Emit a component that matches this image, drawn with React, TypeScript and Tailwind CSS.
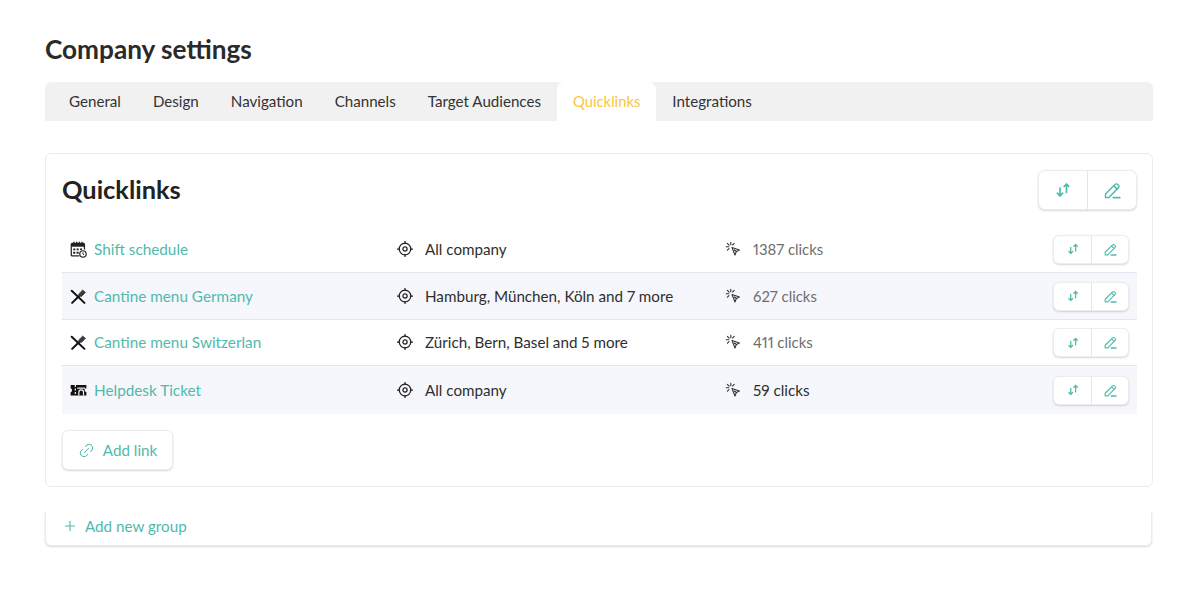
import React from "react";
import { Link2, Plus } from "lucide-react";

const tabs = ["General", "Design", "Navigation", "Channels", "Target Audiences", "Quicklinks", "Integrations"];

function SortIcon({ size }: { size: number }) {
  return (
    <svg width={size} height={size} viewBox="0 0 16 16" fill="none" stroke="#50baab" strokeWidth="1.7" strokeLinecap="round" strokeLinejoin="round">
      <path d="M5 6v8M2.4 11.2 5 14l2.6-2.8" />
      <path d="M11.5 10.5V2M9.2 4.4 11.5 2l2.3 2.4" />
    </svg>
  );
}

function PenIcon({ size }: { size: number }) {
  return (
    <svg width={size} height={size} viewBox="0 0 16 16" fill="none" stroke="#50baab" strokeWidth="1.35" strokeLinecap="round" strokeLinejoin="round">
      <path d="M1.4 14.6v-3.2L10.6 2.2a1.4 1.4 0 0 1 2 0l1.1 1.1a1.4 1.4 0 0 1 0 2L4.6 14.6z" />
      <path d="M9.2 3.6l3.1 3.1" />
      <path d="M8.8 14.7h6" strokeWidth="1.7" />
    </svg>
  );
}

function CalendarIcon() {
  return (
    <svg width="17" height="17" viewBox="0 0 16 16" fill="none" stroke="#222" strokeWidth="1.2">
      <path d="M8.6 14H2.2a1 1 0 0 1-1-1V3.2a1 1 0 0 1 1-1h10.4a1 1 0 0 1 1 1V8" />
      <path d="M1.2 2.2h12.4V5.4H1.2z" fill="#222" stroke="none" />
      <path d="M3.6.6v2.6M6.2.6v2.6M8.8.6v2.6M11.4.6v2.6" strokeWidth="1.2" stroke="#222" />
      <path d="M3 7h2v1.8H3zM6.2 7h2v1.8H6.2zM9.4 7h2v1.4H9.4zM3 10.2h2V12H3zM6.2 10.2h2V12H6.2z" fill="#222" stroke="none" />
      <circle cx="12.2" cy="12.2" r="3" fill="#fff" strokeWidth="1.1" />
      <path d="M12.2 10.6v1.7l1 .7" strokeWidth="0.9" />
    </svg>
  );
}

function CutleryIcon() {
  return (
    <svg width="17" height="17" viewBox="0 0 16 16" fill="none" stroke="#111" strokeLinecap="round">
      <path d="M1.6 2.6 13.6 14" strokeWidth="1.9" />
      <path d="M2 14 8.6 7.6" strokeWidth="1.9" />
      <path d="M8.4 7 8.2 5.6 12 1.8l2.6 2.4-3.8 3.8-1.4-.2z" fill="#3a3a3a" stroke="#3a3a3a" strokeWidth="0.6" strokeLinejoin="round" />
    </svg>
  );
}

function TicketIcon() {
  return (
    <svg width="17" height="17" viewBox="0 0 16 16" fill="none">
      <path d="M.6 2.8h14.8v3a1.8 1.8 0 0 0 0 3.6v3.4H.6V9.6a2 2 0 0 0 0-3.8z" fill="#111" />
      <path d="M5 2.8v10" stroke="#fff" strokeWidth="1.1" strokeDasharray="2 1.3" />
      <path d="M6.8 5.8h7.4" stroke="#fff" strokeWidth="1.1" />
      <path d="M8.3 12.8V9.6a2.2 2.2 0 0 1 4.4 0v3.2" stroke="#fff" strokeWidth="1.1" />
    </svg>
  );
}

function ClickIcon() {
  return (
    <svg width="16" height="16" viewBox="0 0 16 16" fill="none" stroke="#333" strokeWidth="1.1" strokeLinecap="round" strokeLinejoin="round">
      <path d="M7 6.6 14.4 9l-3 1.4-1.4 3.6z" />
      <path d="M9.4 9.2 10.8 10" strokeWidth="1.4" />
      <path d="M5.8 1.2v2.6M1.2 5.8h2.6M2.4 2.4l1.7 1.7M9.2 2.4 7.6 4M2.4 9.2 4 7.6" />
    </svg>
  );
}

function TargetIcon() {
  return (
    <svg width="16" height="16" viewBox="0 0 16 16" fill="none" stroke="#222" strokeWidth="1.25" strokeLinecap="round">
      <circle cx="8" cy="8" r="5.8" />
      <circle cx="8" cy="8" r="2.1" />
      <path d="M8 .4v2.2M8 13.4v2.2M.4 8h2.2M13.4 8h2.2" />
    </svg>
  );
}

function ButtonGroup({ large }: { large?: boolean }) {
  return (
    <div className={large
      ? "flex h-[40px] w-[99px] rounded-[7px] border border-[#ececec] bg-white shadow-[0_1px_2px_rgba(0,0,0,0.16)]"
      : "flex h-[29px] w-[76px] rounded-[6px] border border-[#ececec] bg-white shadow-[0_1px_2px_rgba(0,0,0,0.16)]"}>
      <div className={large ? "flex w-[49px] items-center justify-center border-r border-[#e6e6e6]" : "flex w-[38px] items-center justify-center border-r border-[#e6e6e6]"}>
        <SortIcon size={large ? 16 : 12} />
      </div>
      <div className="flex flex-1 items-center justify-center">
        <PenIcon size={large ? 17 : 13} />
      </div>
    </div>
  );
}

const rows = [
  { icon: <CalendarIcon />, name: "Shift schedule", aud: "All company", clicks: "1387 clicks", muted: true, cls: "h-[47px] bg-white border-b border-[#e4e6ee]" },
  { icon: <CutleryIcon />, name: "Cantine menu Germany", aud: "Hamburg, München, Köln and 7 more", clicks: "627 clicks", muted: true, cls: "h-[47px] bg-[#f6f7fc] border-b border-[#e4e6ee]" },
  { icon: <CutleryIcon />, name: "Cantine menu Switzerlan", aud: "Zürich, Bern, Basel and 5 more", clicks: "411 clicks", muted: true, cls: "h-[46px] bg-white border-b border-[#e4e6ee]" },
  { icon: <TicketIcon />, name: "Helpdesk Ticket", aud: "All company", clicks: "59 clicks", muted: false, cls: "h-[48px] bg-[#f6f7fc]" },
];

export default function App() {
  return (
    <div className="min-h-[593px] bg-white pl-[45px] pr-[47px] pt-[32px] text-[#2b2b2b] font-['Lato','Noto_Sans',sans-serif] proportional-nums">
      <h1 className="h-[34px] text-[26.2px] leading-[34px] font-bold text-[#2a2a2a]">Company settings</h1>

      <div className="mt-[16px] flex h-[39px] rounded-t-[6px] bg-[#f1f1f1] pl-[8px]">
        {tabs.map((t) => (
          <div
            key={t}
            className={t === "Quicklinks"
              ? "flex items-center rounded-t-[7px] bg-white px-[16px] pb-[1px] text-[14.8px] text-[#fbc53f]"
              : "flex items-center px-[16px] pb-[1px] text-[15.15px] text-[#333333]"}
          >
            {t}
          </div>
        ))}
      </div>

      <section className="mt-[32px] h-[334px] rounded-[6px] border border-[#ececec] bg-white pl-[16px] pr-[15px] pt-[16px]">
        <div className="flex h-[40px] items-center justify-between">
          <h2 className="pb-[2px] text-[25.4px] font-bold leading-[38px] text-[#222222]">Quicklinks</h2>
          <ButtonGroup large />
        </div>

        <div className="mt-[16px]">
          {rows.map((r) => (
            <div key={r.name} className={`flex items-center px-[8px] ${r.cls}`}>
              <div className="flex w-[327px] items-center gap-[7px]">
                {r.icon}
                <span className="text-[15.3px] text-[#50baab]">{r.name}</span>
              </div>
              <div className="flex w-[328px] items-center gap-[12px]">
                <TargetIcon />
                <span className="text-[15.2px] text-[#2e2e2e]">{r.aud}</span>
              </div>
              <div className="flex flex-1 items-center gap-[12px]">
                <ClickIcon />
                <span className={r.muted ? "text-[14.9px] text-[#6e6e6e]" : "text-[15.2px] text-[#2e2e2e]"}>{r.clicks}</span>
              </div>
              <ButtonGroup />
            </div>
          ))}
        </div>

        <button className="mt-[16px] flex h-[40px] w-[111px] items-center justify-center gap-[8px] rounded-[6px] border border-[#ececec] bg-white text-[15.2px] text-[#50baab] shadow-[0_1px_2px_rgba(0,0,0,0.16)]">
          <Link2 size={17} strokeWidth={1.4} className="-rotate-45" />
          Add link
        </button>
      </section>

      <div className="mt-[25px] flex h-[34px] w-[1107px] items-center gap-[7px] rounded-b-[6px] border-x border-b border-[#ececec] bg-white pb-[5px] pl-[16px] text-[15.2px] text-[#50baab] shadow-[0_1px_2px_rgba(0,0,0,0.16)]">
        <Plus size={16} strokeWidth={1.6} />
        Add new group
      </div>
    </div>
  );
}
